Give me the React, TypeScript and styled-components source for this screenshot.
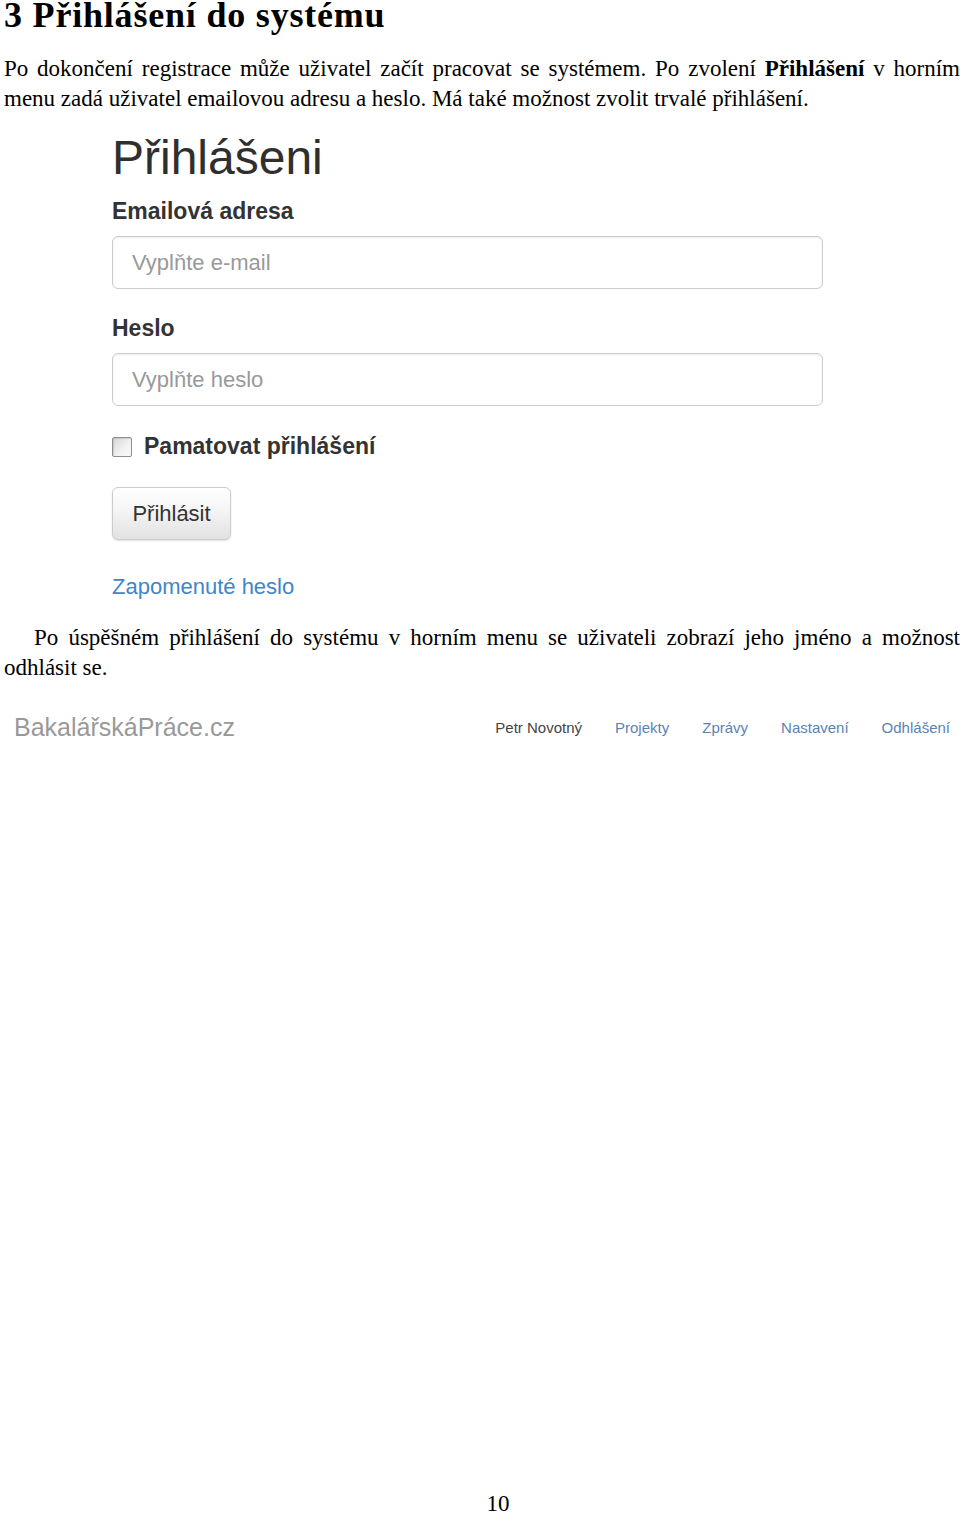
import React from 'react';
import styled, { createGlobalStyle } from 'styled-components';

const GlobalStyle = createGlobalStyle`
  html, body {
    margin: 0;
    padding: 0;
    background: #fff;
  }
  body {
    font-family: "Liberation Serif", "Times New Roman", serif;
    color: #000;
  }
`;

const navItems = ['Projekty', 'Zprávy', 'Nastavení', 'Odhlášení'];

const App = () => {
  return (
    <Page>
      <GlobalStyle />
      <Heading>3 Přihlášení do systému</Heading>
      <Paragraph $top={25}>
        Po dokončení registrace může uživatel začít pracovat se systémem. Po zvolení{' '}
        <b>Přihlášení</b> v horním menu zadá uživatel emailovou adresu a heslo. Má také
        možnost zvolit trvalé přihlášení.
      </Paragraph>

      <LoginShot>
        <LoginTitle>Přihlášeni</LoginTitle>
        <FieldLabel $top={13}>Emailová adresa</FieldLabel>
        <TextInput type="text" placeholder="Vyplňte e-mail" />
        <FieldLabel $top={24}>Heslo</FieldLabel>
        <TextInput type="password" placeholder="Vyplňte heslo" />
        <CheckRow>
          <CheckBox />
          <span>Pamatovat přihlášení</span>
        </CheckRow>
        <LoginButton type="button">Přihlásit</LoginButton>
        <ForgotLink href="#">Zapomenuté heslo</ForgotLink>
      </LoginShot>

      <Paragraph $indent $top={21}>
        Po úspěšném přihlášení do systému v horním menu se uživateli zobrazí jeho jméno a
        možnost odhlásit se.
      </Paragraph>

      <NavShot>
        <Brand>BakalářskáPráce.cz</Brand>
        <NavList>
          <NavUser>Petr Novotný</NavUser>
          {navItems.map((item) => (
            <NavLink key={item} href="#">
              {item}
            </NavLink>
          ))}
        </NavList>
      </NavShot>

      <Footer>10</Footer>
    </Page>
  );
};

export default App;

const Page = styled.div`
  width: 960px;
  min-height: 1515px;
  padding-left: 4px;
  display: flex;
  flex-direction: column;
  box-sizing: border-box;
`;

const Heading = styled.h1`
  margin: 0;
  font-family: "Liberation Serif", "Times New Roman", serif;
  font-size: 36px;
  line-height: 28px;
  padding-top: 1px;
  font-weight: bold;
  letter-spacing: 0.8px;
  white-space: nowrap;
`;

const Paragraph = styled.p<{ $indent?: boolean; $top?: number }>`
  margin: ${(p) => p.$top ?? 20}px 0 0;
  font-size: 23px;
  line-height: 30px;
  text-align: justify;
  text-indent: ${(p) => (p.$indent ? '30px' : '0')};
`;

const LoginShot = styled.div`
  margin: 19px 0 0 108px;
  width: 711px;
  display: flex;
  flex-direction: column;
  align-items: flex-start;
  font-family: "Liberation Sans", Arial, sans-serif;
  color: #333;
`;

const LoginTitle = styled.h2`
  margin: 0;
  font-size: 48px;
  line-height: 50px;
  font-weight: normal;
  color: #2f2f2f;
`;

const FieldLabel = styled.label<{ $top: number }>`
  margin: ${(p) => p.$top}px 0 9px;
  font-size: 23px;
  line-height: 31px;
  font-weight: bold;
`;

const TextInput = styled.input`
  box-sizing: border-box;
  width: 711px;
  height: 53px;
  padding: 0 19px;
  border: 1px solid #ccc;
  border-radius: 6px;
  box-shadow: inset 0 1px 2px rgba(0, 0, 0, 0.08);
  font-family: "Liberation Sans", Arial, sans-serif;
  font-size: 22px;
  color: #555;
  outline: none;
  &::placeholder {
    color: #999;
  }
`;

const CheckRow = styled.div`
  margin-top: 25px;
  display: flex;
  align-items: center;
  gap: 12px;
  font-size: 23px;
  line-height: 31px;
  font-weight: bold;
`;

const CheckBox = styled.span`
  box-sizing: border-box;
  width: 20px;
  height: 20px;
  border: 1px solid #8e8e8e;
  border-radius: 2px;
  background: linear-gradient(135deg, #d6d6d6 0%, #f2f2f2 60%, #fafafa 100%);
  box-shadow: inset 1px 1px 1px rgba(0, 0, 0, 0.12);
`;

const LoginButton = styled.button`
  margin-top: 25px;
  box-sizing: border-box;
  width: 119px;
  height: 53px;
  padding: 0;
  border: 1px solid #ccc;
  border-radius: 6px;
  background: linear-gradient(to bottom, #fff 0%, #f4f4f4 45%, #e2e2e2 100%);
  box-shadow: 0 1px 2px rgba(0, 0, 0, 0.12);
  font-family: "Liberation Sans", Arial, sans-serif;
  font-size: 22px;
  color: #333;
`;

const ForgotLink = styled.a`
  margin-top: 31px;
  font-size: 22px;
  line-height: 31px;
  color: #3f86c8;
  text-decoration: none;
`;

const NavShot = styled.div`
  margin-top: 19px;
  height: 50px;
  display: flex;
  align-items: center;
  justify-content: space-between;
  padding: 0 10px;
  font-family: "Liberation Sans", Arial, sans-serif;
`;

const Brand = styled.span`
  font-size: 25px;
  color: #999;
`;

const NavList = styled.nav`
  display: flex;
  align-items: center;
  gap: 33px;
  font-size: 15px;
`;

const NavUser = styled.span`
  color: #444;
`;

const NavLink = styled.a`
  color: #5b83b1;
  text-decoration: none;
`;

const Footer = styled.div`
  margin-top: auto;
  padding-left: 32px;
  height: 22px;
  display: flex;
  justify-content: center;
  align-items: flex-start;
  font-size: 23px;
  line-height: 22px;
`;
